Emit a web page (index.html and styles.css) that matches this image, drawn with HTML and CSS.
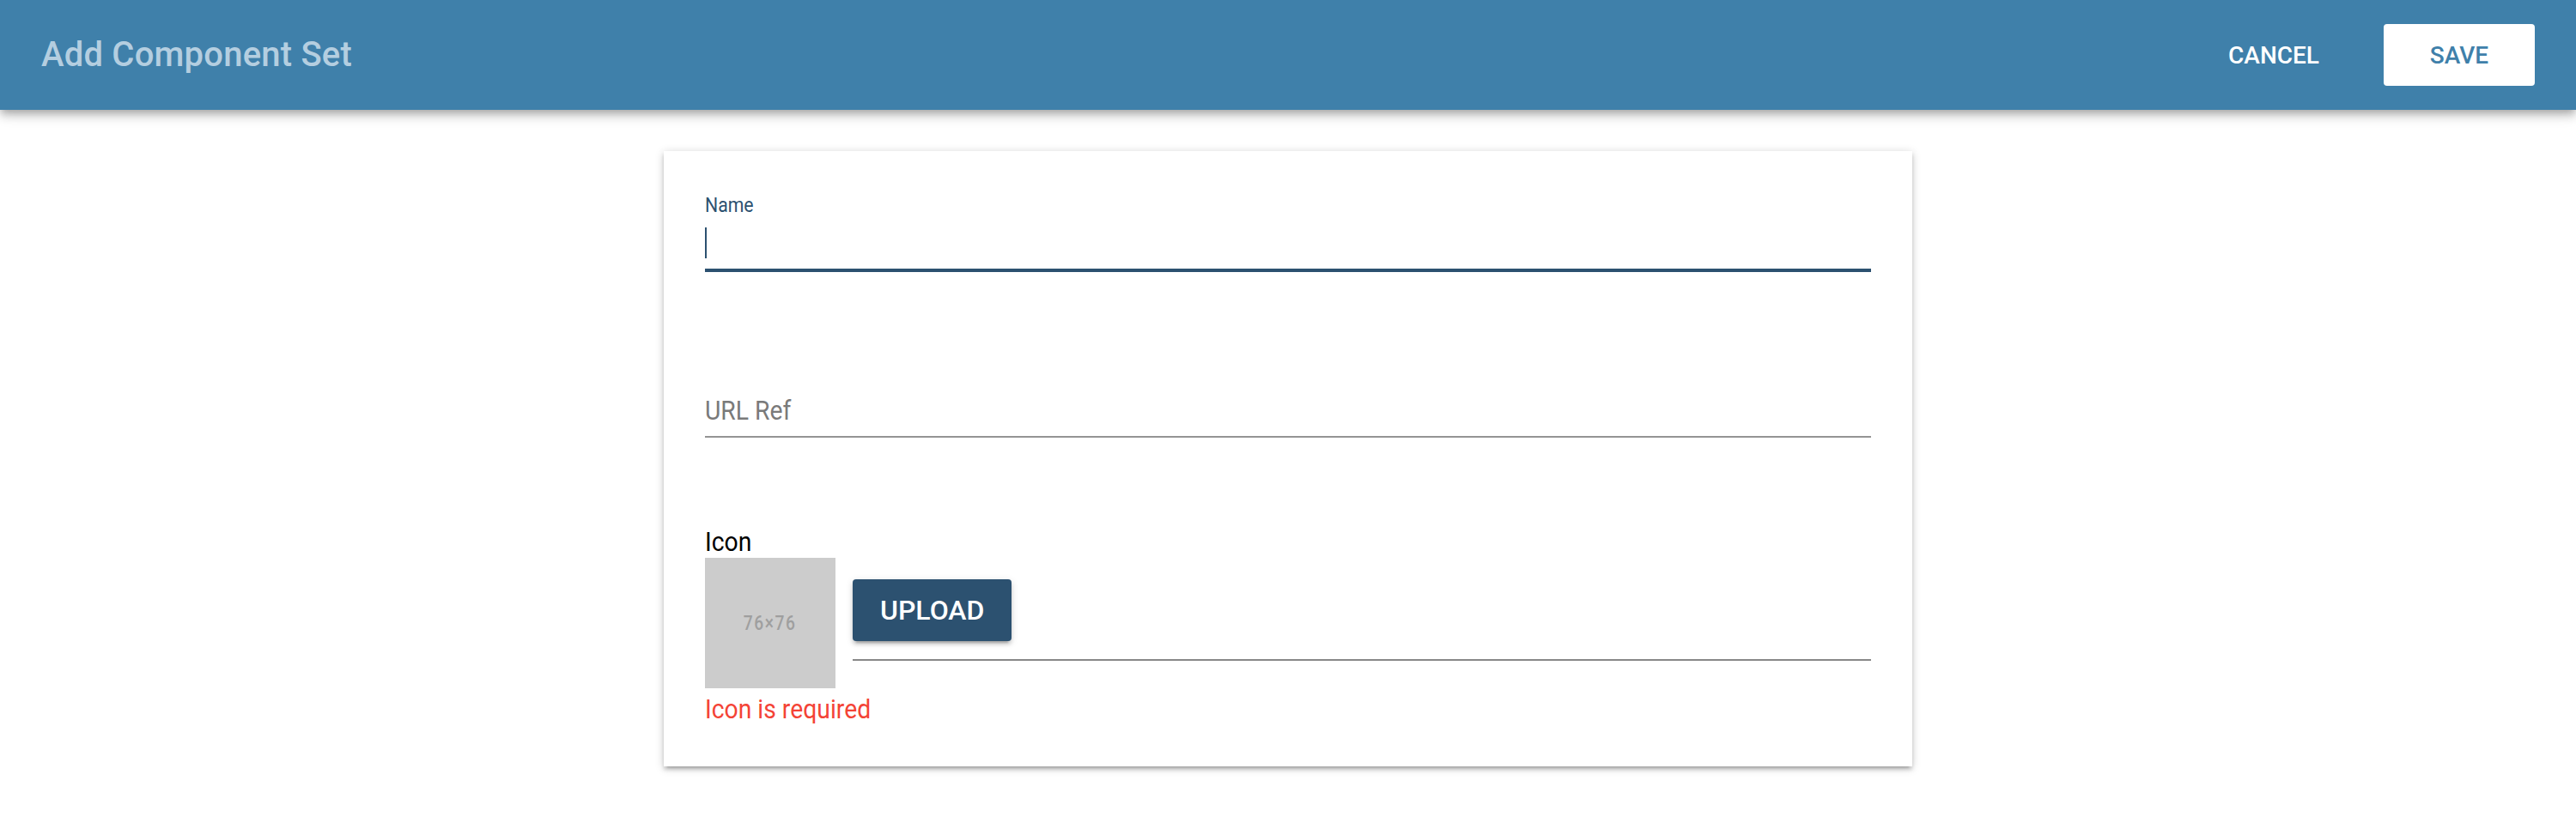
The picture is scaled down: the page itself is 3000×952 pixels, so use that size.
FILE: index.html
```html
<!DOCTYPE html>
<html lang="en">
<head>
<meta charset="utf-8">
<title>Add Component Set</title>
<link rel="stylesheet" href="styles.css">
</head>
<body>
<header class="toolbar">
  <h1 class="title">Add Component Set</h1>
  <div class="actions">
    <button class="btn btn-flat" type="button">Cancel</button>
    <button class="btn btn-save" type="button">Save</button>
  </div>
</header>
<main class="page">
  <form class="card">
    <div class="field focused">
      <div class="float-label"><span class="cond">Name</span></div>
      <div class="input"><span class="caret"></span></div>
      <div class="underline"></div>
    </div>
    <div class="field">
      <div class="float-label"></div>
      <div class="input"><span class="placeholder cond">URL Ref</span></div>
      <div class="underline"></div>
    </div>
    <div class="icon-field">
      <div class="icon-label"><span class="cond">Icon</span></div>
      <div class="icon-row">
        <div class="thumb"><span class="thumb-text">76×76</span></div>
        <div class="upload-col">
          <button class="btn btn-upload" type="button">Upload</button>
          <div class="underline"></div>
        </div>
      </div>
      <div class="error"><span class="cond">Icon is required</span></div>
    </div>
  </form>
</main>
</body>
</html>
```

FILE: styles.css
```css
* { box-sizing: border-box; }

html, body {
  margin: 0;
  padding: 0;
  background: #ffffff;
  font-family: Roboto, "Noto Sans", "Liberation Sans", sans-serif;
}

.toolbar {
  height: 128px;
  background: #3f80aa;
  display: flex;
  align-items: center;
  justify-content: space-between;
  padding: 0 48px 0 48px;
  box-shadow: 0 4px 8px -2px rgba(0,0,0,.2), 0 8px 10px 0 rgba(0,0,0,.14), 0 2px 20px 0 rgba(0,0,0,.12);
  position: relative;
  z-index: 2;
}

.title {
  margin: 0;
  font-size: 40px;
  font-weight: 500;
  letter-spacing: .2px;
  color: #b4cee0;
  line-height: 1;
}

.actions {
  display: flex;
  align-items: center;
  gap: 40px;
}

.btn {
  font-family: Roboto, "Liberation Sans", sans-serif;
  font-weight: 500;
  text-transform: uppercase;
  border: none;
  border-radius: 4px;
  cursor: pointer;
  padding: 0 32px;
}

.btn-flat, .btn-save {
  min-width: 176px;
  height: 72px;
  font-size: 28px;
}

.btn-flat {
  background: transparent;
  color: #ffffff;
}

.btn-save {
  background: #ffffff;
  color: #3f80aa;
}

.page {
  padding: 48px 0;
}

.card {
  width: 1454px;
  margin: 0 auto;
  background: #ffffff;
  padding: 48px;
  box-shadow: 0 4px 4px 0 rgba(0,0,0,.14), 0 6px 2px -4px rgba(0,0,0,.12), 0 2px 10px 0 rgba(0,0,0,.2);
}

.cond {
  display: inline-block;
  transform: scaleX(.885);
  transform-origin: 0 50%;
  white-space: nowrap;
}

.field {
  margin-bottom: 102px;
}

.float-label {
  height: 30px;
  font-size: 24px;
  line-height: 30px;
  color: #2c5170;
}

.input {
  padding: 11px 0 12px;
  height: 59px;
}

.caret {
  display: block;
  width: 2px;
  height: 36px;
  background: #2c5170;
}

.placeholder {
  font-size: 32px;
  line-height: 36px;
  color: #7a7a7a;
}

.underline {
  height: 2px;
  background: #949494;
}

.field.focused .underline {
  height: 4px;
  background: #2c5170;
}

.icon-label {
  font-size: 32px;
  line-height: 38px;
  color: #000000;
}

.icon-row {
  display: flex;
  align-items: flex-start;
  gap: 20px;
}

.thumb {
  width: 152px;
  height: 152px;
  background: #cccccc;
  display: flex;
  align-items: center;
  justify-content: center;
}

.thumb-text {
  display: inline-block;
  font-size: 24px;
  font-weight: 500;
  color: #9f9f9f;
  transform: scaleX(.8);
  letter-spacing: 2px;
}

.upload-col {
  flex: 1;
  padding-top: 25px;
}

.btn-upload {
  height: 72px;
  font-size: 32px;
  background: #2c5170;
  color: #ffffff;
  box-shadow: 0 6px 2px -4px rgba(0,0,0,.2), 0 4px 4px 0 rgba(0,0,0,.14), 0 2px 10px 0 rgba(0,0,0,.12);
}

.upload-col .underline {
  margin-top: 21px;
  background: #888888;
}

.error {
  margin-top: 5px;
  font-size: 32px;
  line-height: 38px;
  color: #f44336;
}
```
